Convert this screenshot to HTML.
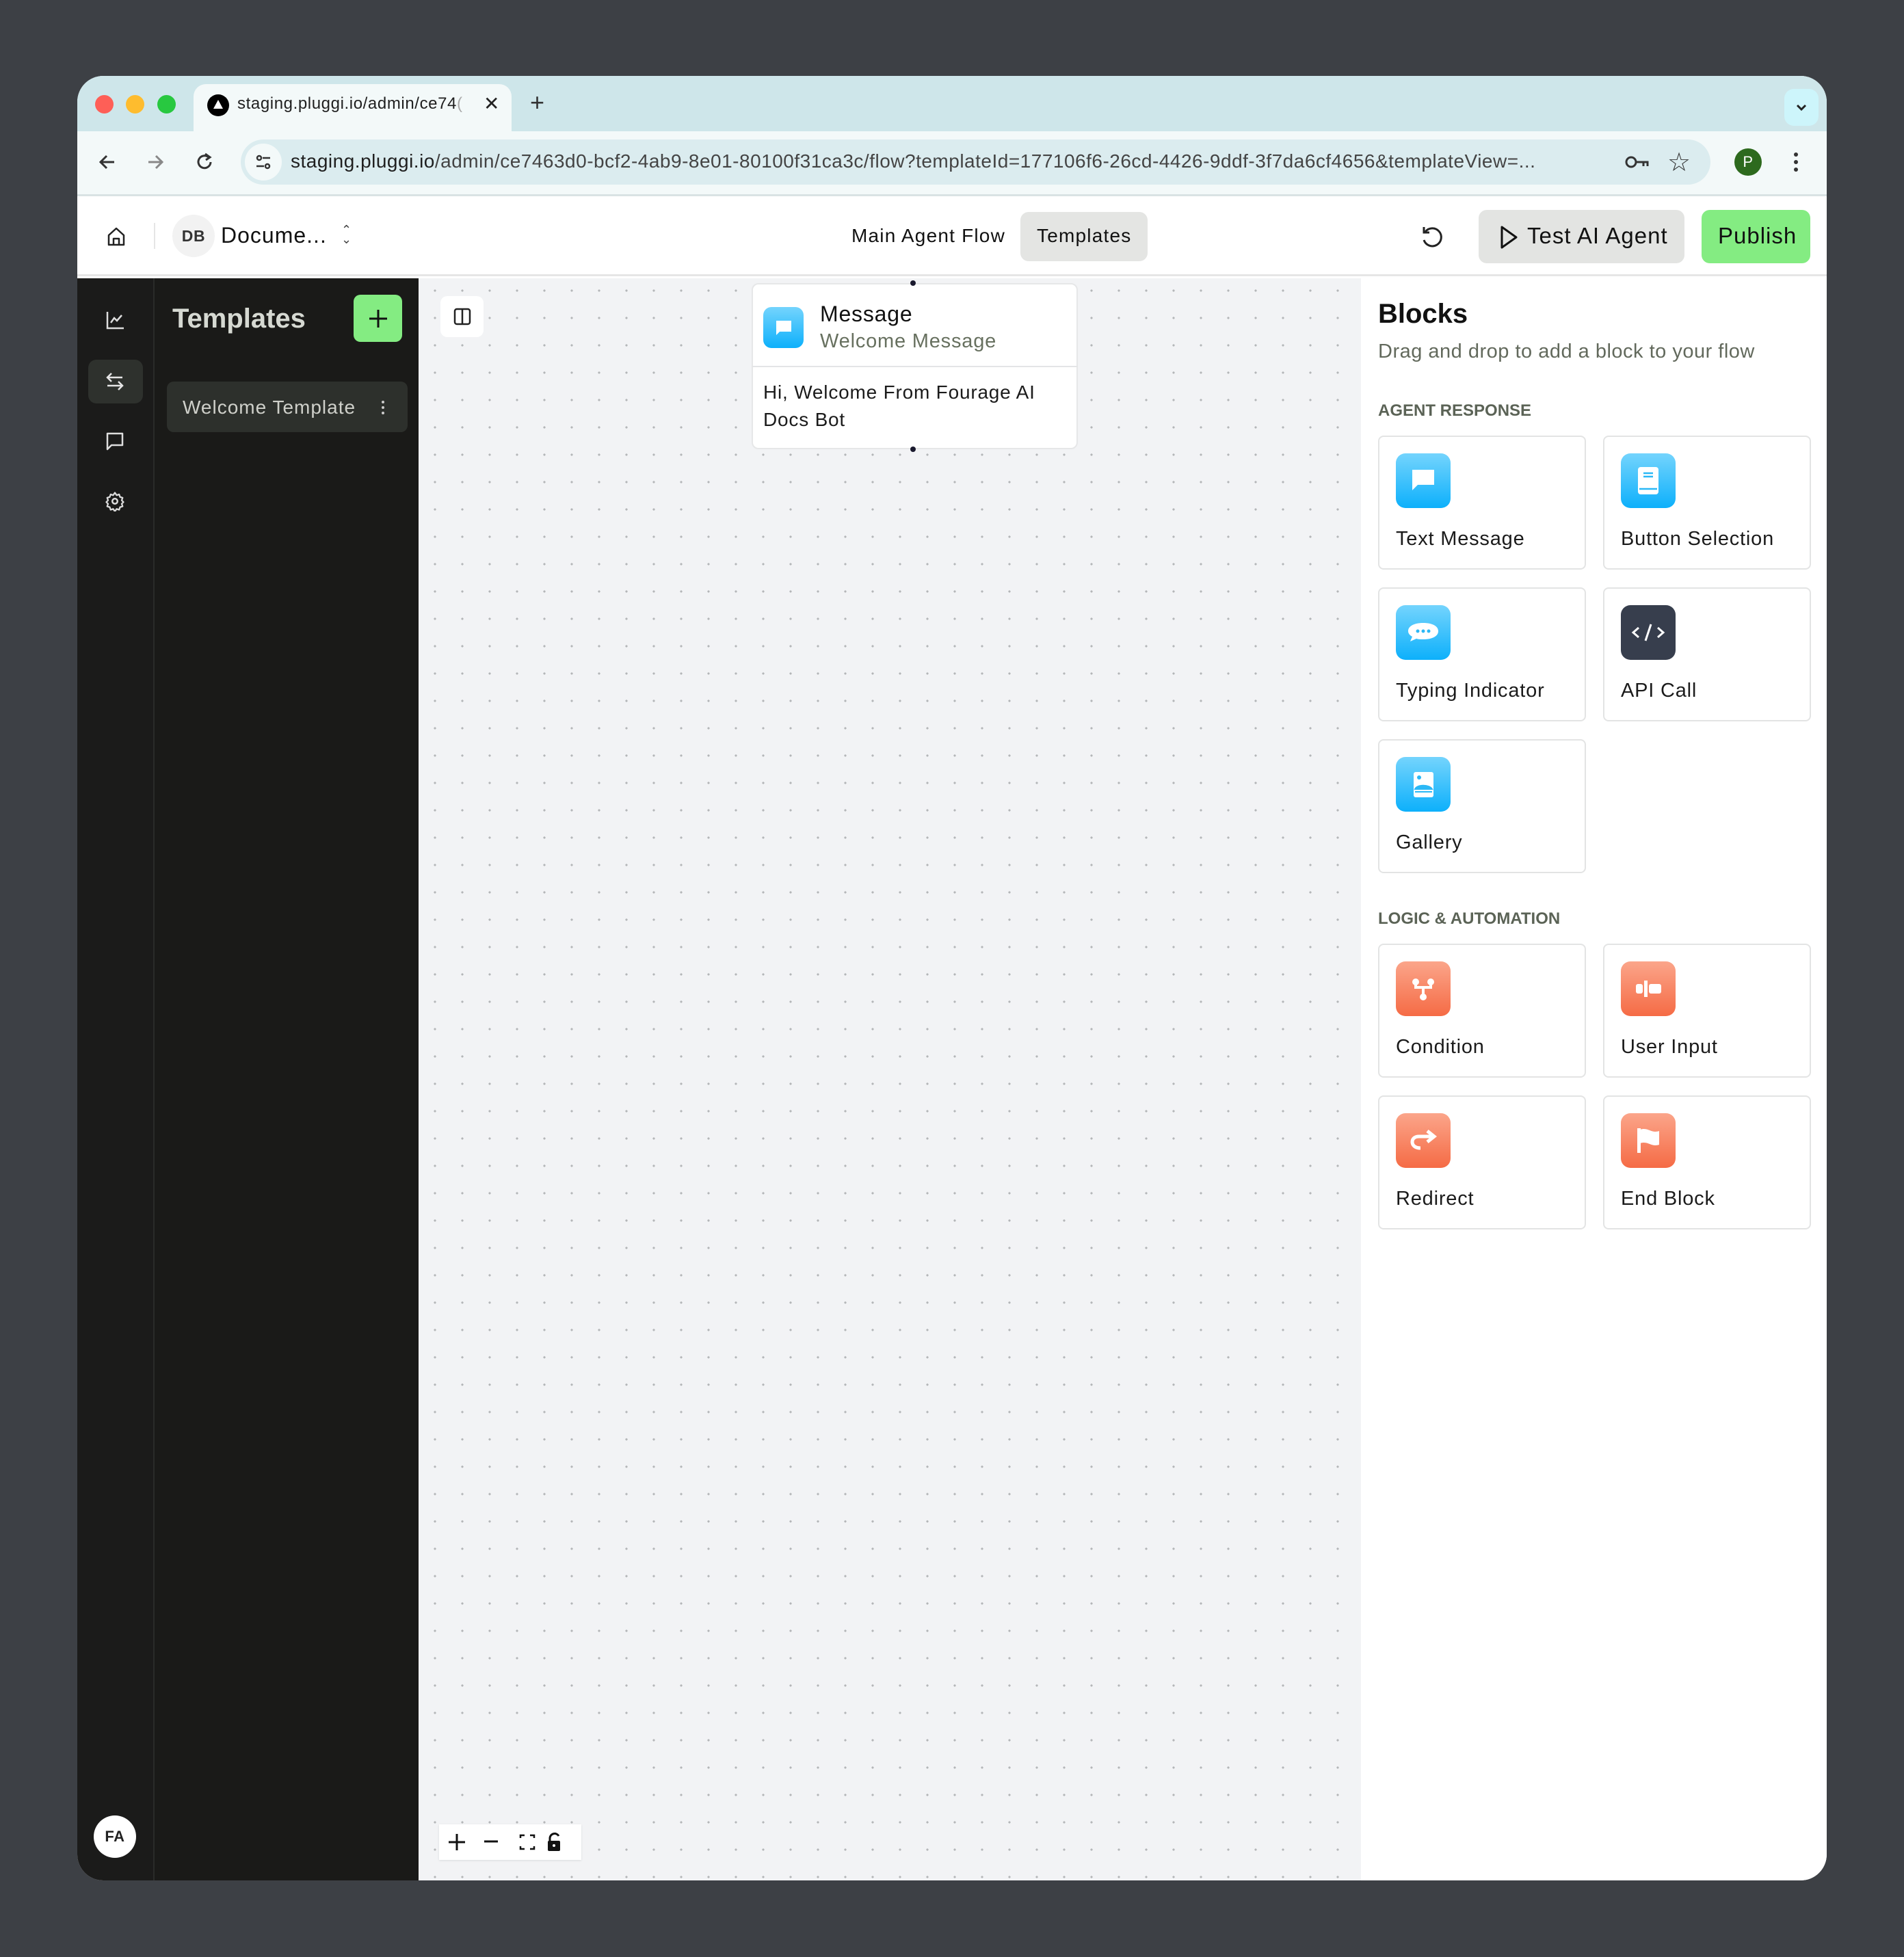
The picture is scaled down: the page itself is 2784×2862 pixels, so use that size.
<!DOCTYPE html>
<html><head><meta charset="utf-8"><style>
*{box-sizing:border-box;margin:0;padding:0}
body{width:2784px;height:2862px;background:#3d4045;font-family:"Liberation Sans",sans-serif;position:relative;overflow:hidden;letter-spacing:0.6px}
.a{position:absolute}
.win{left:113px;top:111px;width:2558px;height:2639px;border-radius:38px;overflow:hidden;background:#fff}
.t{white-space:nowrap}
.card{position:absolute;width:304px;height:196px;border:2px solid #e3e4e4;border-radius:8px;background:#fff}
.card .ic{position:absolute;left:24px;top:24px;width:80px;height:80px;border-radius:14px}
.card .lb{position:absolute;left:24px;top:133px;font-size:29px;color:#1b1b1b;font-weight:500;letter-spacing:0.8px}
.blue{background:linear-gradient(#74d4fd,#0db0fb)}
.org{background:linear-gradient(#fba58a,#f56b45)}
.dark{background:#373e4d}
</style></head><body>
<div class="a win">
 <div class="a" style="left:0;top:0;width:2558px;height:81px;background:#cee6ea"></div>
 <div class="a" style="left:26px;top:28px;width:27px;height:27px;border-radius:50%;background:#fe5f57"></div>
 <div class="a" style="left:71px;top:28px;width:27px;height:27px;border-radius:50%;background:#febc2e"></div>
 <div class="a" style="left:117px;top:28px;width:27px;height:27px;border-radius:50%;background:#28c840"></div>
 <div class="a" style="left:170px;top:12px;width:465px;height:75px;background:#f3f9f9;border-radius:18px 18px 0 0"></div>
 <div class="a" style="left:190px;top:27px;width:32px;height:32px;border-radius:50%;background:#000"></div>
 <svg class="a" style="left:196px;top:32px" width="20" height="20" viewBox="0 0 20 20"><path d="M10 3 L17 16 L3 16Z" fill="#fff"/></svg>
 <div class="a t" style="left:234px;top:27px;font-size:24px;color:#1f1f1f">staging.pluggi.io/admin/ce74<span style="color:#aaa">(</span></div>
 <div class="a t" style="left:594px;top:24px;font-size:28px;color:#222">✕</div>
 <div class="a t" style="left:662px;top:18px;font-size:36px;color:#333">+</div>
 <div class="a" style="left:2496px;top:19px;width:50px;height:54px;border-radius:14px;background:#cdf5fb"></div>
 <svg class="a" style="left:2510px;top:36px" width="22" height="20"><path d="M5 7 L11 13 L17 7" stroke="#222" stroke-width="3" fill="none"/></svg>
 <div class="a" style="left:0;top:81px;width:2558px;height:92px;background:#f3f9f9"></div>
 <svg class="a" style="left:28px;top:110px" width="32" height="32" viewBox="0 0 32 32"><path d="M26 16H7M15 7L6 16L15 25" stroke="#333" stroke-width="3" fill="none"/></svg>
 <svg class="a" style="left:98px;top:110px" width="32" height="32" viewBox="0 0 32 32"><path d="M6 16H25M17 7L26 16L17 25" stroke="#888" stroke-width="3" fill="none"/></svg>
 <svg class="a" style="left:170px;top:110px" width="32" height="32" viewBox="0 0 32 32"><path d="M25 16A9 9 0 1 1 22 9" stroke="#333" stroke-width="3" fill="none"/><path d="M17 4L24 9L18 13" stroke="#333" stroke-width="3" fill="none"/></svg>
 <div class="a" style="left:239px;top:93px;width:2149px;height:66px;border-radius:33px;background:#dbecef"></div>
 <div class="a" style="left:245px;top:99px;width:54px;height:54px;border-radius:50%;background:#f3f9f9"></div>
 <svg class="a" style="left:258px;top:112px" width="28" height="28" viewBox="0 0 28 28"><circle cx="8" cy="8" r="3" stroke="#333" stroke-width="2.5" fill="none"/><path d="M13 8H24M4 20H15" stroke="#333" stroke-width="2.5"/><circle cx="20" cy="20" r="3" stroke="#333" stroke-width="2.5" fill="none"/></svg>
 <div class="a t" style="left:312px;top:109px;font-size:28px;color:#1f1f1f;letter-spacing:0.5px">staging.pluggi.io<span style="color:#444">/admin/ce7463d0-bcf2-4ab9-8e01-80100f31ca3c/flow?templateId=177106f6-26cd-4426-9ddf-3f7da6cf4656&amp;templateView=...</span></div>
 <svg class="a" style="left:2262px;top:112px" width="38" height="28" viewBox="0 0 38 28"><circle cx="10" cy="14" r="7" stroke="#333" stroke-width="3" fill="none"/><path d="M17 14H34V20M28 14V20" stroke="#333" stroke-width="3" fill="none"/></svg>
 <div class="a t" style="left:2325px;top:104px;font-size:38px;color:#333">☆</div>
 <div class="a" style="left:2423px;top:106px;width:40px;height:40px;border-radius:50%;background:#2d6a1e;color:#fff;font-size:22px;text-align:center;line-height:40px">P</div>
 <div class="a" style="left:2510px;top:112px;width:6px;height:6px;border-radius:50%;background:#333;box-shadow:0 11px 0 #333,0 22px 0 #333"></div>
 <div class="a" style="left:0;top:173px;width:2558px;height:3px;background:#d9e3e4"></div>
 <div class="a" style="left:0;top:176px;width:2558px;height:117px;background:#fff;border-bottom:3px solid #e6e6e6"></div>
 <svg class="a" style="left:41px;top:219px" width="32" height="32" viewBox="0 0 32 32"><path d="M5 14L16 4L27 14V28H5Z M12 28V19H20V28" stroke="#222" stroke-width="2.5" fill="none" stroke-linejoin="round"/></svg>
 <div class="a" style="left:112px;top:215px;width:2px;height:38px;background:#e5e5e5"></div>
 <div class="a" style="left:139px;top:203px;width:62px;height:62px;border-radius:50%;background:#f2f2f2;font-size:23px;font-weight:bold;color:#333;text-align:center;line-height:62px">DB</div>
 <div class="a t" style="left:210px;top:215px;font-size:32px;color:#111;font-weight:500;letter-spacing:1px">Docume...</div>
 <div class="a t" style="left:386px;top:218px;font-size:18px;color:#444;line-height:14px">⌃<br>⌄</div>
 <div class="a t" style="left:1132px;top:218px;font-size:28px;color:#111;letter-spacing:1.2px">Main Agent Flow</div>
 <div class="a" style="left:1379px;top:199px;width:186px;height:72px;border-radius:12px;background:#e4e5e3"></div>
 <div class="a t" style="left:1403px;top:218px;font-size:28px;color:#111;letter-spacing:1.2px">Templates</div>
 <svg class="a" style="left:1961px;top:216px" width="40" height="40" viewBox="0 0 40 40"><path d="M10 12A13 13 0 1 1 8 24" stroke="#222" stroke-width="3" fill="none"/><path d="M8 5V13H16" stroke="#222" stroke-width="3" fill="none"/></svg>
 <div class="a" style="left:2049px;top:196px;width:301px;height:78px;border-radius:12px;background:#e3e4e2"></div>
 <svg class="a" style="left:2078px;top:218px" width="30" height="36" viewBox="0 0 30 36"><path d="M5 3L26 18L5 33Z" stroke="#111" stroke-width="3" fill="none" stroke-linejoin="round"/></svg>
 <div class="a t" style="left:2120px;top:215px;font-size:33px;color:#111;letter-spacing:1px">Test AI Agent</div>
 <div class="a" style="left:2375px;top:196px;width:159px;height:78px;border-radius:12px;background:#84ec82"></div>
 <div class="a t" style="left:2399px;top:215px;font-size:33px;color:#111;font-weight:500;letter-spacing:1px">Publish</div>
 <div class="a" style="left:0;top:296px;width:113px;height:2343px;background:#1b1b1a;border-right:2px solid #2a2b29"></div>
 <svg class="a" style="left:41px;top:343px" width="28" height="28" viewBox="0 0 28 28"><path d="M3 2V26H27M8 18L13 11L17 15L24 7" stroke="#ddd" stroke-width="2.5" fill="none"/></svg>
 <div class="a" style="left:16px;top:415px;width:80px;height:64px;border-radius:12px;background:#2e312d"></div>
 <svg class="a" style="left:40px;top:432px" width="30" height="30" viewBox="0 0 30 30"><path d="M26 9H4M10 3L4 9L10 15M4 21H26M20 15L26 21L20 27" stroke="#e5e5e5" stroke-width="2.5" fill="none"/></svg>
 <svg class="a" style="left:41px;top:520px" width="28" height="28" viewBox="0 0 28 28"><path d="M3 3H25V20H9L3 26Z" stroke="#ddd" stroke-width="2.5" fill="none" stroke-linejoin="round"/></svg>
 <svg class="a" style="left:40px;top:607px" width="30" height="30" viewBox="0 0 24 24"><circle cx="12" cy="12" r="3" stroke="#ddd" stroke-width="2" fill="none"/><path d="M12 2l2 3 3-1 1 3 3 1-1 3 2 2-2 2 1 3-3 1-1 3-3-1-2 3-2-3-3 1-1-3-3-1 1-3-2-2 2-2-1-3 3-1 1-3 3 1z" stroke="#ddd" stroke-width="1.8" fill="none" stroke-linejoin="round"/></svg>
 <div class="a" style="left:24px;top:2544px;width:62px;height:62px;border-radius:50%;background:#fff;font-size:22px;font-weight:bold;color:#222;text-align:center;line-height:62px">FA</div>
 <div class="a" style="left:113px;top:296px;width:386px;height:2343px;background:#1a1a18"></div>
 <div class="a t" style="left:139px;top:333px;font-size:40px;font-weight:bold;color:#d6d9d2;letter-spacing:0">Templates</div>
 <div class="a" style="left:404px;top:320px;width:71px;height:69px;border-radius:10px;background:#84ec82"></div>
 <svg class="a" style="left:424px;top:339px" width="32" height="32"><path d="M16 3V29M3 16H29" stroke="#111" stroke-width="3"/></svg>
 <div class="a" style="left:131px;top:447px;width:352px;height:74px;border-radius:10px;background:#2d302c"></div>
 <div class="a t" style="left:154px;top:469px;font-size:28px;color:#cfd0ca;letter-spacing:1px">Welcome Template</div>
 <div class="a" style="left:445px;top:475px;width:4px;height:4px;border-radius:50%;background:#ccc;box-shadow:0 8px 0 #ccc,0 16px 0 #ccc"></div>
 <div class="a" style="left:499px;top:296px;width:1378px;height:2343px;background-color:#f2f3f5;background-image:radial-gradient(circle,#b4b6b8 1.5px,transparent 1.8px);background-size:40px 40px;background-position:4px -2px"></div>
 <div class="a" style="left:531px;top:322px;width:63px;height:60px;border-radius:10px;background:#fff"></div>
 <svg class="a" style="left:549px;top:338px" width="28" height="28" viewBox="0 0 28 28"><rect x="3" y="3" width="22" height="22" rx="3" stroke="#222" stroke-width="2.5" fill="none"/><path d="M14 3V25" stroke="#222" stroke-width="2.5"/></svg>
 <div class="a" style="left:986px;top:303px;width:477px;height:243px;border:2px solid #e6e7e8;border-radius:10px;background:#fff"></div>
 <div class="a" style="left:986px;top:424px;width:477px;height:2px;background:#e4e5e6"></div>
 <div class="a" style="left:1218px;top:299px;width:8px;height:8px;border-radius:50%;background:#1a1a2e"></div>
 <div class="a" style="left:1218px;top:542px;width:8px;height:8px;border-radius:50%;background:#1a1a2e"></div>
 <div class="a blue" style="left:1003px;top:338px;width:59px;height:60px;border-radius:12px"></div>
 <svg class="a" style="left:1018px;top:353px" width="30" height="30" viewBox="0 0 30 30"><path d="M4 5H26V21H9L4 26Z" fill="#fff"/></svg>
 <div class="a t" style="left:1086px;top:330px;font-size:32px;color:#111;font-weight:500;letter-spacing:0.8px">Message</div>
 <div class="a t" style="left:1086px;top:372px;font-size:29px;color:#67705f;letter-spacing:0.8px">Welcome Message</div>
 <div class="a t" style="left:1003px;top:443px;font-size:28px;color:#1b1b1b;line-height:40px;letter-spacing:0.8px">Hi, Welcome From Fourage AI<br>Docs Bot</div>
 <div class="a" style="left:529px;top:2557px;width:208px;height:52px;background:#fff;box-shadow:0 1px 3px rgba(0,0,0,.1)"></div>
 <svg class="a" style="left:529px;top:2557px" width="208" height="52" viewBox="0 0 208 52"><path d="M14 26H38M26 14V38M66 25H86" stroke="#111" stroke-width="3"/><path d="M119 20V16H125M133 16H139V20M139 32V36H133M125 36H119V32" stroke="#111" stroke-width="2.5" fill="none"/><path d="M162 26V20A7 7 0 0 1 175 17" stroke="#111" stroke-width="3" fill="none"/><rect x="159" y="24" width="18" height="15" rx="2" fill="#111"/><circle cx="168" cy="31" r="2" fill="#fff"/></svg>
 <div class="a" style="left:1877px;top:296px;width:681px;height:2343px;background:#fff"></div>
 <div class="a t" style="left:1902px;top:326px;font-size:40px;font-weight:bold;color:#111;letter-spacing:0">Blocks</div>
 <div class="a t" style="left:1902px;top:387px;font-size:29px;color:#62695c;letter-spacing:0.5px">Drag and drop to add a block to your flow</div>
 <div class="a t" style="left:1902px;top:476px;font-size:24px;font-weight:bold;color:#5b6356;letter-spacing:0">AGENT RESPONSE</div>
 <div class="card" style="left:1902px;top:526px"><div class="ic blue"><svg width="80" height="80" viewBox="0 0 80 80"><path d="M24 24H56V46H32L24 54Z" fill="#fff"/></svg></div><div class="lb">Text Message</div></div>
 <div class="card" style="left:2231px;top:526px"><div class="ic blue"><svg width="80" height="80" viewBox="0 0 80 80"><rect x="25" y="20" width="30" height="40" rx="4" fill="#fff"/><path d="M33 29H47M33 34H47M27 52H53" stroke="#2bb8f6" stroke-width="2.5"/></svg></div><div class="lb">Button Selection</div></div>
 <div class="card" style="left:1902px;top:748px"><div class="ic blue"><svg width="80" height="80" viewBox="0 0 80 80"><path d="M40 26C54 26 62 31 62 38C62 45 54 50 40 50C36 50 33 50 30 49L21 53L24 46C20 44 18 41 18 38C18 31 26 26 40 26Z" fill="#fff"/><circle cx="32" cy="38" r="2.5" fill="#2bb8f6"/><circle cx="40" cy="38" r="2.5" fill="#2bb8f6"/><circle cx="48" cy="38" r="2.5" fill="#2bb8f6"/></svg></div><div class="lb">Typing Indicator</div></div>
 <div class="card" style="left:2231px;top:748px"><div class="ic dark"><svg width="80" height="80" viewBox="0 0 80 80"><path d="M26 33L18 40L26 47M54 33L62 40L54 47M44 28L36 52" stroke="#fff" stroke-width="3" fill="none"/></svg></div><div class="lb">API Call</div></div>
 <div class="card" style="left:1902px;top:970px"><div class="ic blue"><svg width="80" height="80" viewBox="0 0 80 80"><rect x="26" y="22" width="29" height="37" rx="3" fill="#fff"/><circle cx="34" cy="30" r="3" fill="#2bb8f6"/><path d="M28 47C31 40 49 40 53 47Z M28 51H53" fill="#2bb8f6" stroke="#2bb8f6" stroke-width="2"/></svg></div><div class="lb">Gallery</div></div>
 <div class="a t" style="left:1902px;top:1219px;font-size:24px;font-weight:bold;color:#5b6356;letter-spacing:0">LOGIC &amp; AUTOMATION</div>
 <div class="card" style="left:1902px;top:1269px"><div class="ic org"><svg width="80" height="80" viewBox="0 0 80 80"><circle cx="29" cy="30" r="5" fill="#fff"/><circle cx="51" cy="30" r="5" fill="#fff"/><circle cx="40" cy="52" r="5" fill="#fff"/><path d="M29 30V38H51V30M40 38V52" stroke="#fff" stroke-width="4" fill="none"/></svg></div><div class="lb">Condition</div></div>
 <div class="card" style="left:2231px;top:1269px"><div class="ic org"><svg width="80" height="80" viewBox="0 0 80 80"><rect x="22" y="33" width="10" height="14" rx="3" fill="#fff"/><rect x="34" y="28" width="5" height="24" fill="#fff"/><rect x="41" y="33" width="18" height="14" rx="3" fill="#fff"/></svg></div><div class="lb">User Input</div></div>
 <div class="card" style="left:1902px;top:1491px"><div class="ic org"><svg width="80" height="80" viewBox="0 0 80 80"><path d="M36 51C27 51 24 46 24 42C24 37 28 34 34 34H52" stroke="#fff" stroke-width="5" fill="none"/><path d="M46 26L56 34L46 42" stroke="#fff" stroke-width="5" fill="none"/></svg></div><div class="lb">Redirect</div></div>
 <div class="card" style="left:2231px;top:1491px"><div class="ic org"><svg width="80" height="80" viewBox="0 0 80 80"><path d="M24 22H29V58H24Z" fill="#fff"/><path d="M28 24C40 20 44 30 56 26V46C44 50 40 40 28 44Z" fill="#fff"/></svg></div><div class="lb">End Block</div></div>
</div>
</body></html>
